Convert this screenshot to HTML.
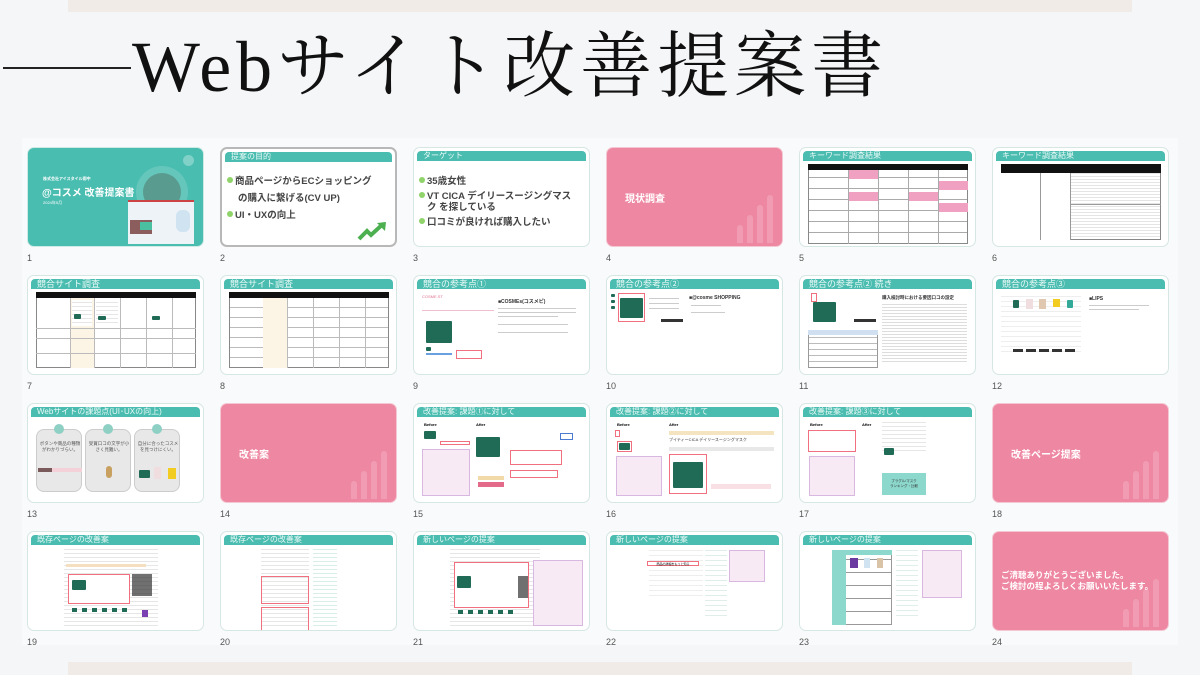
<!DOCTYPE html>
<html><head><meta charset="utf-8">
<style>
*{margin:0;padding:0;box-sizing:border-box}
body{width:1200px;height:675px;background:#f5f6f8;position:relative;overflow:hidden;font-family:"Liberation Sans","Noto Sans CJK JP",sans-serif}
.topband{position:absolute;left:68px;top:0;width:1064px;height:12px;background:#f0ebe6}
.botband{position:absolute;left:68px;top:662px;width:1064px;height:13px;background:#f0ebe6}
.line{position:absolute;left:3px;top:67px;width:128px;height:2px;background:#222}
.title{position:absolute;left:132px;top:27px;font-size:72px;line-height:80px;color:#111;font-family:"Liberation Serif","Noto Serif CJK SC",serif;white-space:nowrap;letter-spacing:5px}
.panel{position:absolute;left:22px;top:138px;width:1156px;height:507px;background:#f9fafb}
.s{position:absolute;width:177px;height:100px;background:#fff;border:1.5px solid #d6e6e3;border-radius:7px;overflow:hidden}
.s.sel{border:2px solid #b8b8b8}
.h{position:absolute;left:3px;top:3px;right:3px;height:10px;background:#4bbcb0;border-radius:4px 4px 0 0;color:#eafaf7;font-size:8px;line-height:10px;padding-left:6px;white-space:nowrap;overflow:hidden}
.n{position:absolute;font-size:9px;color:#555}
.pink{background:#ee87a2;border-color:#f3c8d3}
.pink .t{position:absolute;color:#fff;font-weight:bold;font-size:10px}
.bar{position:absolute;bottom:3px;width:6px;background:rgba(255,255,255,.18);border-radius:3px 3px 0 0}
.b{position:absolute;font-size:9.5px;font-weight:bold;color:#444;white-space:nowrap}
.dot{display:inline-block;width:6px;height:6px;border-radius:50%;background:#8fd36a;margin-right:2px;vertical-align:1px}
.tbl{position:absolute;border:1px solid #888;background:
 repeating-linear-gradient(90deg,transparent 0 22px,#bbb 22px 23px),
 repeating-linear-gradient(0deg,transparent 0 12px,#ccc 12px 13px);}
.thd{position:absolute;height:6px;background:#111}
.g{position:absolute;background:#1f6b55;border-radius:1px}
.r{position:absolute;border:1px solid #f07080}
.tx{position:absolute;height:1px;background:#ccc}
.shot{position:absolute;background:repeating-linear-gradient(0deg,#fff 0 3px,#e6e6e6 3px 4px)}
.pt{position:absolute;background:#f7eaf4;border:1px solid #d8b8e0}
</style></head><body>
<div class="topband"></div>
<div class="line"></div>
<div class="title">Webサイト改善提案書</div>
<div class="panel"></div>

<!-- Row 1 -->
<div class="s" style="left:27px;top:147px;background:#4abdb1;border-color:#cfe9e5">
 <div style="position:absolute;left:108px;top:18px;width:52px;height:52px;border-radius:50%;background:rgba(255,255,255,.15)"></div>
 <div style="position:absolute;left:115px;top:25px;width:38px;height:38px;border-radius:50%;background:#5a9b8f"></div>
 <div style="position:absolute;left:155px;top:7px;width:11px;height:11px;border-radius:50%;background:rgba(255,255,255,.3)"></div>
 <div style="position:absolute;left:15px;top:28px;color:#fff;font-size:4px;font-weight:bold">株式会社アイスタイル御中</div>
 <div style="position:absolute;left:14px;top:36px;color:#fff;font-size:10px;font-weight:bold;white-space:nowrap">@コスメ 改善提案書</div>
 <div style="position:absolute;left:15px;top:52px;color:#fff;font-size:4px">2024年5月</div>
 <div style="position:absolute;left:100px;top:52px;width:66px;height:44px;background:#eef3f8;border-top:2px solid #c44"></div>
 <div style="position:absolute;left:102px;top:72px;width:22px;height:14px;background:#8b5d5d"></div>
 <div style="position:absolute;left:112px;top:74px;width:12px;height:8px;background:#4bc0a0"></div>
 <div style="position:absolute;left:148px;top:62px;width:14px;height:22px;background:#cfe3f0;border-radius:6px"></div>
</div>
<div class="n" style="left:27px;top:253px">1</div>

<div class="s sel" style="left:220px;top:147px">
 <div class="h">提案の目的</div>
 <div class="b" style="left:5px;top:24px"><span class="dot"></span>商品ページからECショッピング</div>
 <div class="b" style="left:16px;top:41px">の購入に繋げる(CV UP)</div>
 <div class="b" style="left:5px;top:58px"><span class="dot"></span>UI・UXの向上</div>
 <svg style="position:absolute;left:135px;top:72px" width="32" height="20"><path d="M2 18 L10 10 L14 14 L26 3" stroke="#4cb050" stroke-width="4" fill="none"/><path d="M20 2 L29 1 L28 10 Z" fill="#4cb050"/></svg>
</div>
<div class="n" style="left:220px;top:253px">2</div>

<div class="s" style="left:413px;top:147px">
 <div class="h">ターゲット</div>
 <div class="b" style="left:5px;top:25px"><span class="dot"></span>35歳女性</div>
 <div class="b" style="left:5px;top:40px"><span class="dot"></span>VT CICA デイリースージングマス</div>
 <div class="b" style="left:13px;top:51px">ク を探している</div>
 <div class="b" style="left:5px;top:66px"><span class="dot"></span>口コミが良ければ購入したい</div>
</div>
<div class="n" style="left:413px;top:253px">3</div>

<div class="s pink" style="left:606px;top:147px">
 <div class="t" style="left:18px;top:42px">現状調査</div>
 <div class="bar" style="left:130px;height:18px"></div><div class="bar" style="left:140px;height:28px"></div><div class="bar" style="left:150px;height:38px"></div><div class="bar" style="left:160px;height:48px"></div>
</div>
<div class="n" style="left:606px;top:253px">4</div>

<div class="s" style="left:799px;top:147px">
 <div class="h">キーワード調査結果</div>
 <div class="tbl" style="left:8px;top:16px;width:160px;height:80px;background:repeating-linear-gradient(0deg,transparent 0 10px,#aaa 10px 11px)"></div>
 <div class="thd" style="left:8px;top:16px;width:160px"></div>
 <div style="position:absolute;left:48px;top:22px;width:1px;height:74px;background:#aaa"></div>
 <div style="position:absolute;left:78px;top:22px;width:1px;height:74px;background:#aaa"></div>
 <div style="position:absolute;left:108px;top:22px;width:1px;height:74px;background:#aaa"></div>
 <div style="position:absolute;left:138px;top:22px;width:1px;height:74px;background:#aaa"></div>
 <div style="position:absolute;left:49px;top:22px;width:29px;height:9px;background:#f0a0c0"></div>
 <div style="position:absolute;left:139px;top:33px;width:29px;height:9px;background:#f0a0c0"></div>
 <div style="position:absolute;left:49px;top:44px;width:29px;height:9px;background:#f0a0c0"></div>
 <div style="position:absolute;left:109px;top:44px;width:29px;height:9px;background:#f0a0c0"></div>
 <div style="position:absolute;left:139px;top:55px;width:29px;height:9px;background:#f0a0c0"></div>
</div>
<div class="n" style="left:799px;top:253px">5</div>

<div class="s" style="left:992px;top:147px">
 <div class="h">キーワード調査結果</div>
 <div class="tbl" style="left:8px;top:16px;width:160px;height:76px;background:repeating-linear-gradient(0deg,#fff 0 2px,#e4e4e4 2px 3px)"></div>
 <div class="thd" style="left:8px;top:16px;width:160px;height:9px"></div>
 <div style="position:absolute;left:8px;top:56px;width:160px;height:1px;background:#999"></div>
 <div style="position:absolute;left:48px;top:25px;width:30px;height:67px;background:#fff;border-right:1px solid #999"></div>
 <div style="position:absolute;left:8px;top:25px;width:40px;height:67px;background:#fff;border-right:1px solid #999"></div>
</div>
<div class="n" style="left:992px;top:253px">6</div>

<!-- Row 2 -->
<div class="s" style="left:27px;top:275px">
 <div class="h" style="font-size:9px">競合サイト調査</div>
 <div class="tbl" style="left:8px;top:16px;width:160px;height:76px;background:#fff"></div>
 <div class="thd" style="left:8px;top:16px;width:160px"></div>
 <div style="position:absolute;left:42px;top:22px;width:24px;height:70px;background:#fcf4e4"></div>
 <div style="position:absolute;left:42px;top:22px;width:1px;height:70px;background:#bbb"></div><div style="position:absolute;left:66px;top:22px;width:1px;height:70px;background:#bbb"></div><div style="position:absolute;left:92px;top:22px;width:1px;height:70px;background:#bbb"></div><div style="position:absolute;left:118px;top:22px;width:1px;height:70px;background:#bbb"></div><div style="position:absolute;left:144px;top:22px;width:1px;height:70px;background:#bbb"></div>
 <div style="position:absolute;left:8px;top:52px;width:160px;height:1px;background:#bbb"></div><div style="position:absolute;left:8px;top:62px;width:160px;height:1px;background:#bbb"></div><div style="position:absolute;left:8px;top:77px;width:160px;height:1px;background:#bbb"></div>
 <div class="shot" style="left:44px;top:24px;width:20px;height:26px"></div><div class="g" style="left:46px;top:38px;width:7px;height:5px"></div>
 <div class="shot" style="left:68px;top:24px;width:22px;height:26px"></div><div class="g" style="left:70px;top:40px;width:8px;height:4px"></div>
 <div class="g" style="left:124px;top:40px;width:8px;height:4px"></div>
</div>
<div class="n" style="left:27px;top:381px">7</div>

<div class="s" style="left:220px;top:275px">
 <div class="h" style="font-size:9px">競合サイト調査</div>
 <div class="tbl" style="left:8px;top:16px;width:160px;height:76px;background:repeating-linear-gradient(0deg,#fff 0 9px,#bbb 9px 10px)"></div>
 <div class="thd" style="left:8px;top:16px;width:160px"></div>
 <div style="position:absolute;left:42px;top:22px;width:24px;height:70px;background:#fcf4e4"></div>
 <div style="position:absolute;left:66px;top:22px;width:1px;height:70px;background:#bbb"></div><div style="position:absolute;left:92px;top:22px;width:1px;height:70px;background:#bbb"></div><div style="position:absolute;left:118px;top:22px;width:1px;height:70px;background:#bbb"></div><div style="position:absolute;left:144px;top:22px;width:1px;height:70px;background:#bbb"></div>
</div>
<div class="n" style="left:220px;top:381px">8</div>

<div class="s" style="left:413px;top:275px">
 <div class="h" style="font-size:9px">競合の参考点①</div>
 <div style="position:absolute;left:8px;top:18px;font-size:4px;color:#e07090">COSME.ST</div>
 <div class="tx" style="left:8px;top:34px;width:72px;background:#f0c0d0"></div>
 <div class="g" style="left:12px;top:45px;width:26px;height:22px"></div>
 <div class="g" style="left:12px;top:71px;width:5px;height:4px"></div>
 <div style="position:absolute;left:12px;top:77px;width:26px;height:2px;background:#6aa0e0"></div>
 <div class="r" style="left:42px;top:74px;width:26px;height:9px"></div>
 <div style="position:absolute;left:84px;top:22px;font-size:5px;color:#333;font-weight:bold">■COSMEs(コスメピ)</div>
 <div class="tx" style="left:84px;top:32px;width:78px"></div><div class="tx" style="left:84px;top:36px;width:78px"></div><div class="tx" style="left:84px;top:40px;width:60px"></div><div class="tx" style="left:84px;top:48px;width:70px"></div><div class="tx" style="left:84px;top:56px;width:70px"></div>
</div>
<div class="n" style="left:413px;top:381px">9</div>

<div class="s" style="left:606px;top:275px">
 <div class="h" style="font-size:9px">競合の参考点②</div>
 <div class="g" style="left:4px;top:18px;width:4px;height:3px"></div><div class="g" style="left:4px;top:24px;width:4px;height:3px"></div><div class="g" style="left:4px;top:30px;width:4px;height:3px"></div>
 <div class="r" style="left:11px;top:17px;width:27px;height:29px"></div>
 <div class="g" style="left:13px;top:22px;width:23px;height:20px"></div>
 <div class="tx" style="left:42px;top:22px;width:30px"></div><div class="tx" style="left:42px;top:27px;width:30px"></div><div class="tx" style="left:42px;top:32px;width:30px"></div>
 <div style="position:absolute;left:54px;top:43px;width:22px;height:3px;background:#333"></div>
 <div style="position:absolute;left:82px;top:19px;font-size:5px;font-weight:bold;color:#333">■@cosme SHOPPING</div>
 <div class="tx" style="left:84px;top:29px;width:30px"></div><div class="tx" style="left:84px;top:36px;width:34px"></div>
</div>
<div class="n" style="left:606px;top:381px">10</div>

<div class="s" style="left:799px;top:275px">
 <div class="h" style="font-size:9px">競合の参考点② 続き</div>
 <div class="r" style="left:11px;top:17px;width:6px;height:9px"></div>
 <div class="g" style="left:13px;top:26px;width:23px;height:20px"></div>
 <div style="position:absolute;left:54px;top:43px;width:22px;height:3px;background:#333"></div>
 <div style="position:absolute;left:8px;top:54px;width:70px;height:38px;border:1px solid #999;background:repeating-linear-gradient(0deg,#fff 0 5px,#bbb 5px 6px)"></div>
 <div style="position:absolute;left:8px;top:54px;width:70px;height:5px;background:#d0e0f0"></div>
 <div style="position:absolute;left:82px;top:19px;font-size:4.5px;font-weight:bold;color:#333;white-space:nowrap">購入検討時における要因口コの設定</div>
 <div class="shot" style="left:82px;top:28px;width:85px;height:60px;background:repeating-linear-gradient(0deg,#fff 0 2px,#ddd 2px 3px)"></div>
</div>
<div class="n" style="left:799px;top:381px">11</div>

<div class="s" style="left:992px;top:275px">
 <div class="h" style="font-size:9px">競合の参考点③</div>
 <div class="shot" style="left:8px;top:20px;width:80px;height:60px;background:repeating-linear-gradient(0deg,#fff 0 4px,#eee 4px 5px)"></div>
 <div class="g" style="left:20px;top:24px;width:6px;height:8px"></div>
 <div style="position:absolute;left:33px;top:23px;width:7px;height:10px;background:#f0dde0"></div>
 <div style="position:absolute;left:46px;top:23px;width:7px;height:10px;background:#e0c8b0"></div>
 <div style="position:absolute;left:60px;top:23px;width:7px;height:8px;background:#f2cc20"></div>
 <div class="g" style="left:74px;top:24px;width:6px;height:8px;background:#3a9"></div>
 <div style="position:absolute;left:20px;top:73px;width:62px;height:3px;background:repeating-linear-gradient(90deg,#333 0 10px,transparent 10px 13px)"></div>
 <div style="position:absolute;left:96px;top:20px;font-size:5px;font-weight:bold;color:#333">■LIPS</div>
 <div class="tx" style="left:96px;top:29px;width:60px"></div><div class="tx" style="left:96px;top:33px;width:50px"></div>
</div>
<div class="n" style="left:992px;top:381px">12</div>

<!-- Row 3 -->
<div class="s" style="left:27px;top:403px">
 <div class="h">Webサイトの課題点(UI･UXの向上)</div>
 <div style="position:absolute;left:8px;top:25px;width:46px;height:63px;background:#e8e8e8;border:1px solid #ccc;border-radius:8px"></div>
 <div style="position:absolute;left:57px;top:25px;width:46px;height:63px;background:#e8e8e8;border:1px solid #ccc;border-radius:8px"></div>
 <div style="position:absolute;left:106px;top:25px;width:46px;height:63px;background:#e8e8e8;border:1px solid #ccc;border-radius:8px"></div>
 <div style="position:absolute;left:26px;top:20px;width:10px;height:10px;border-radius:50%;background:#8fd0c4"></div>
 <div style="position:absolute;left:75px;top:20px;width:10px;height:10px;border-radius:50%;background:#8fd0c4"></div>
 <div style="position:absolute;left:124px;top:20px;width:10px;height:10px;border-radius:50%;background:#8fd0c4"></div>
 <div style="position:absolute;left:10px;top:37px;width:44px;font-size:4.5px;color:#555;text-align:center">ボタンや商品の種類がわかりづらい。</div>
 <div style="position:absolute;left:59px;top:37px;width:44px;font-size:4.5px;color:#555;text-align:center">受賞口コの文字が小さく見難い。</div>
 <div style="position:absolute;left:108px;top:37px;width:44px;font-size:4.5px;color:#555;text-align:center">自分に合ったコスメを見つけにくい。</div>
 <div style="position:absolute;left:10px;top:64px;width:44px;height:4px;background:#f4d0d8"></div>
 <div style="position:absolute;left:10px;top:64px;width:14px;height:4px;background:#7a5a5a"></div>
 <div style="position:absolute;left:78px;top:62px;width:6px;height:12px;background:#c8a060;border-radius:3px"></div>
 <div class="g" style="left:111px;top:66px;width:11px;height:8px"></div>
 <div style="position:absolute;left:126px;top:63px;width:7px;height:12px;background:#f0dde0"></div>
 <div style="position:absolute;left:140px;top:64px;width:8px;height:11px;background:#f2cc20"></div>
</div>
<div class="n" style="left:27px;top:509px">13</div>

<div class="s pink" style="left:220px;top:403px">
 <div class="t" style="left:18px;top:42px">改善案</div>
 <div class="bar" style="left:130px;height:18px"></div><div class="bar" style="left:140px;height:28px"></div><div class="bar" style="left:150px;height:38px"></div><div class="bar" style="left:160px;height:48px"></div>
</div>
<div class="n" style="left:220px;top:509px">14</div>

<div class="s" style="left:413px;top:403px">
 <div class="h">改善提案: 課題①に対して</div>
 <div style="position:absolute;left:10px;top:18px;font-size:4px;font-weight:bold">Before</div>
 <div style="position:absolute;left:62px;top:18px;font-size:4px;font-weight:bold">After</div>
 <div class="g" style="left:10px;top:27px;width:12px;height:8px"></div>
 <div class="r" style="left:26px;top:37px;width:30px;height:4px"></div>
 <div class="pt" style="left:8px;top:45px;width:48px;height:47px"></div>
 <div class="g" style="left:62px;top:33px;width:24px;height:20px"></div>
 <div style="position:absolute;left:64px;top:72px;width:26px;height:4px;background:#f2d9a8"></div>
 <div style="position:absolute;left:64px;top:78px;width:26px;height:5px;background:#e46a8a"></div>
 <div class="r" style="left:96px;top:46px;width:52px;height:15px"></div>
 <div class="r" style="left:96px;top:66px;width:48px;height:8px"></div>
 <div class="r" style="left:146px;top:29px;width:13px;height:7px;border-color:#4a7bd0"></div>
</div>
<div class="n" style="left:413px;top:509px">15</div>

<div class="s" style="left:606px;top:403px">
 <div class="h">改善提案: 課題②に対して</div>
 <div style="position:absolute;left:10px;top:18px;font-size:4px;font-weight:bold">Before</div>
 <div style="position:absolute;left:62px;top:18px;font-size:4px;font-weight:bold">After</div>
 <div class="r" style="left:8px;top:26px;width:5px;height:7px"></div>
 <div class="r" style="left:10px;top:37px;width:15px;height:11px"></div><div class="g" style="left:12px;top:39px;width:11px;height:7px"></div>
 <div class="pt" style="left:9px;top:52px;width:46px;height:40px"></div>
 <div style="position:absolute;left:62px;top:27px;width:105px;height:4px;background:#f4e4c0"></div>
 <div style="position:absolute;left:62px;top:33px;font-size:4px;color:#333;white-space:nowrap">ブイティーCICA デイリースージングマスク</div>
 <div style="position:absolute;left:62px;top:43px;width:105px;height:4px;background:#e8e8e8"></div>
 <div class="r" style="left:62px;top:50px;width:38px;height:40px"></div><div class="g" style="left:66px;top:58px;width:30px;height:26px"></div>
 <div style="position:absolute;left:104px;top:80px;width:60px;height:5px;background:#f8e0e4"></div>
</div>
<div class="n" style="left:606px;top:509px">16</div>

<div class="s" style="left:799px;top:403px">
 <div class="h">改善提案: 課題③に対して</div>
 <div style="position:absolute;left:10px;top:18px;font-size:4px;font-weight:bold">Before</div>
 <div style="position:absolute;left:62px;top:18px;font-size:4px;font-weight:bold">After</div>
 <div class="r" style="left:8px;top:26px;width:48px;height:22px"></div>
 <div class="pt" style="left:9px;top:52px;width:46px;height:40px"></div>
 <div class="shot" style="left:82px;top:18px;width:44px;height:32px"></div>
 <div class="g" style="left:84px;top:44px;width:10px;height:7px"></div>
 <div style="position:absolute;left:82px;top:69px;width:44px;height:22px;background:#8cd8cc;font-size:3.5px;color:#333;text-align:center;padding-top:6px">ブラグル/マスク<br>ランキング・比較</div>
</div>
<div class="n" style="left:799px;top:509px">17</div>

<div class="s pink" style="left:992px;top:403px">
 <div class="t" style="left:18px;top:42px">改善ページ提案</div>
 <div class="bar" style="left:130px;height:18px"></div><div class="bar" style="left:140px;height:28px"></div><div class="bar" style="left:150px;height:38px"></div><div class="bar" style="left:160px;height:48px"></div>
</div>
<div class="n" style="left:992px;top:509px">18</div>

<!-- Row 4 -->
<div class="s" style="left:27px;top:531px">
 <div class="h">既存ページの改善案</div>
 <div class="shot" style="left:36px;top:17px;width:94px;height:80px"></div>
 <div style="position:absolute;left:38px;top:32px;width:80px;height:3px;background:#f4e0c0"></div>
 <div class="r" style="left:40px;top:42px;width:62px;height:30px;background:#fff"></div>
 <div class="g" style="left:44px;top:48px;width:14px;height:10px"></div>
 <div style="position:absolute;left:104px;top:42px;width:20px;height:22px;background:#333;opacity:.7"></div>
 <div style="position:absolute;left:44px;top:76px;width:56px;height:4px;background:repeating-linear-gradient(90deg,#1f6b55 0 5px,transparent 5px 10px)"></div>
 <div style="position:absolute;left:114px;top:78px;width:6px;height:7px;background:#7a3fb0"></div>
</div>
<div class="n" style="left:27px;top:637px">19</div>

<div class="s" style="left:220px;top:531px">
 <div class="h">既存ページの改善案</div>
 <div class="shot" style="left:40px;top:17px;width:48px;height:80px"></div>
 <div class="shot" style="left:92px;top:17px;width:24px;height:80px;background:repeating-linear-gradient(0deg,#fff 0 3px,#d8eee8 3px 4px)"></div>
 <div class="r" style="left:40px;top:44px;width:48px;height:28px"></div>
 <div class="r" style="left:40px;top:75px;width:48px;height:25px"></div>
</div>
<div class="n" style="left:220px;top:637px">20</div>

<div class="s" style="left:413px;top:531px">
 <div class="h">新しいページの提案</div>
 <div class="shot" style="left:36px;top:17px;width:90px;height:80px"></div>
 <div class="r" style="left:40px;top:30px;width:75px;height:46px;background:#fff"></div>
 <div class="g" style="left:43px;top:44px;width:14px;height:12px"></div>
 <div style="position:absolute;left:104px;top:44px;width:10px;height:22px;background:#333;opacity:.7"></div>
 <div style="position:absolute;left:44px;top:78px;width:56px;height:4px;background:repeating-linear-gradient(90deg,#1f6b55 0 5px,transparent 5px 10px)"></div>
 <div class="pt" style="left:119px;top:28px;width:50px;height:66px"></div>
</div>
<div class="n" style="left:413px;top:637px">21</div>

<div class="s" style="left:606px;top:531px">
 <div class="h">新しいページの提案</div>
 <div class="shot" style="left:42px;top:18px;width:54px;height:50px;background:repeating-linear-gradient(0deg,#fff 0 4px,#eee 4px 5px)"></div>
 <div class="r" style="left:40px;top:29px;width:52px;height:5px;background:#fff;font-size:3px;text-align:center;line-height:4px">商品の詳細をもっと知る</div>
 <div class="shot" style="left:98px;top:18px;width:22px;height:70px;background:repeating-linear-gradient(0deg,#fff 0 4px,#dfeeea 4px 5px)"></div>
 <div class="pt" style="left:122px;top:18px;width:36px;height:32px"></div>
</div>
<div class="n" style="left:606px;top:637px">22</div>

<div class="s" style="left:799px;top:531px">
 <div class="h">新しいページの提案</div>
 <div style="position:absolute;left:32px;top:18px;width:60px;height:75px;border:1px solid #999;background:repeating-linear-gradient(0deg,#fff 0 12px,#999 12px 13px)"></div>
 <div style="position:absolute;left:32px;top:18px;width:14px;height:75px;background:#8cd8cc"></div>
 <div style="position:absolute;left:32px;top:18px;width:60px;height:5px;background:#8cd8cc"></div>
 <div style="position:absolute;left:50px;top:26px;width:8px;height:10px;background:#6b3aa0"></div>
 <div style="position:absolute;left:64px;top:26px;width:6px;height:10px;background:#cfe3f0"></div>
 <div style="position:absolute;left:77px;top:26px;width:6px;height:10px;background:#d9c4a8"></div>
 <div class="shot" style="left:96px;top:18px;width:22px;height:70px;background:repeating-linear-gradient(0deg,#fff 0 4px,#dfeeea 4px 5px)"></div>
 <div class="pt" style="left:122px;top:18px;width:40px;height:48px"></div>
</div>
<div class="n" style="left:799px;top:637px">23</div>

<div class="s pink" style="left:992px;top:531px">
 <div class="t" style="left:8px;top:38px;font-size:8.5px;line-height:11px;white-space:nowrap">ご清聴ありがとうございました。<br>ご検討の程よろしくお願いいたします。</div>
 <div class="bar" style="left:130px;height:18px"></div><div class="bar" style="left:140px;height:28px"></div><div class="bar" style="left:150px;height:38px"></div><div class="bar" style="left:160px;height:48px"></div>
</div>
<div class="n" style="left:992px;top:637px">24</div>

<div class="botband"></div>
</body></html>
